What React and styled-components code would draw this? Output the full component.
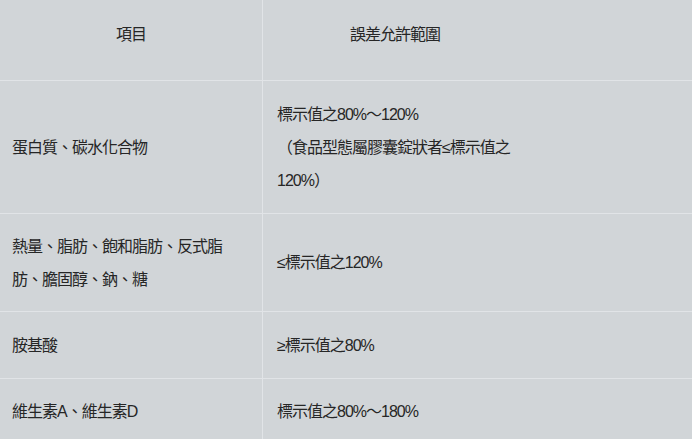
import React from 'react';
import styled, { createGlobalStyle } from 'styled-components';

const GlobalStyle = createGlobalStyle`
  html, body {
    margin: 0;
    padding: 0;
    background: #d1d5d8;
  }
  body {
    font-family: "Liberation Sans", "Noto Sans CJK TC", sans-serif;
    color: #262626;
  }
`;

const Table = styled.div`
  width: 692px;
  display: flex;
  flex-direction: column;
  background: #d1d5d8;
`;

const Row = styled.div`
  display: grid;
  grid-template-columns: 263px 1fr;
  height: ${(props) => props.h}px;
  box-sizing: border-box;
  border-bottom: 1px solid #e1e4e7;
`;

const Cell = styled.div`
  display: flex;
  align-items: center;
  box-sizing: border-box;
  font-size: 16px;
  letter-spacing: -1px;
  line-height: 33px;
  &:first-child {
    border-right: 1px solid #e1e4e7;
    padding: 0 28px 0 12px;
  }
  &:last-child {
    padding: 0 0 0 14px;
  }
`;

const CellText = styled.div`
  max-width: ${(props) => props.max || 240}px;
`;

const HeadCell = styled.div`
  display: flex;
  align-items: center;
  justify-content: center;
  box-sizing: border-box;
  font-size: 16px;
  letter-spacing: -1px;
  padding-bottom: 14px;
  &:first-child {
    border-right: 1px solid #e1e4e7;
  }
  &:last-child {
    padding-right: 165px;
  }
`;

const rows = [
  { h: 133, item: '蛋白質、碳水化合物' },
  { h: 98, item: '熱量、脂肪、飽和脂肪、反式脂肪、膽固醇、鈉、糖', range: '≤標示值之120%' },
  { h: 67, item: '胺基酸', range: '≥標示值之80%' },
  { h: 66, item: '維生素A、維生素D', range: '標示值之80%～180%' },
];

const App = () => (
  <>
    <GlobalStyle />
    <Table>
      <Row h={81}>
        <HeadCell>項目</HeadCell>
        <HeadCell>誤差允許範圍</HeadCell>
      </Row>
      {rows.map((r) => (
        <Row key={r.item} h={r.h}>
          <Cell>
            <CellText max={222}>{r.item}</CellText>
          </Cell>
          <Cell>
            <CellText>
              {r.range || (
                <>
                  標示值之80%～120%
                  <br />
                  （食品型態屬膠囊錠狀者≤標示值之120%）
                </>
              )}
            </CellText>
          </Cell>
        </Row>
      ))}
    </Table>
  </>
);

export default App;
